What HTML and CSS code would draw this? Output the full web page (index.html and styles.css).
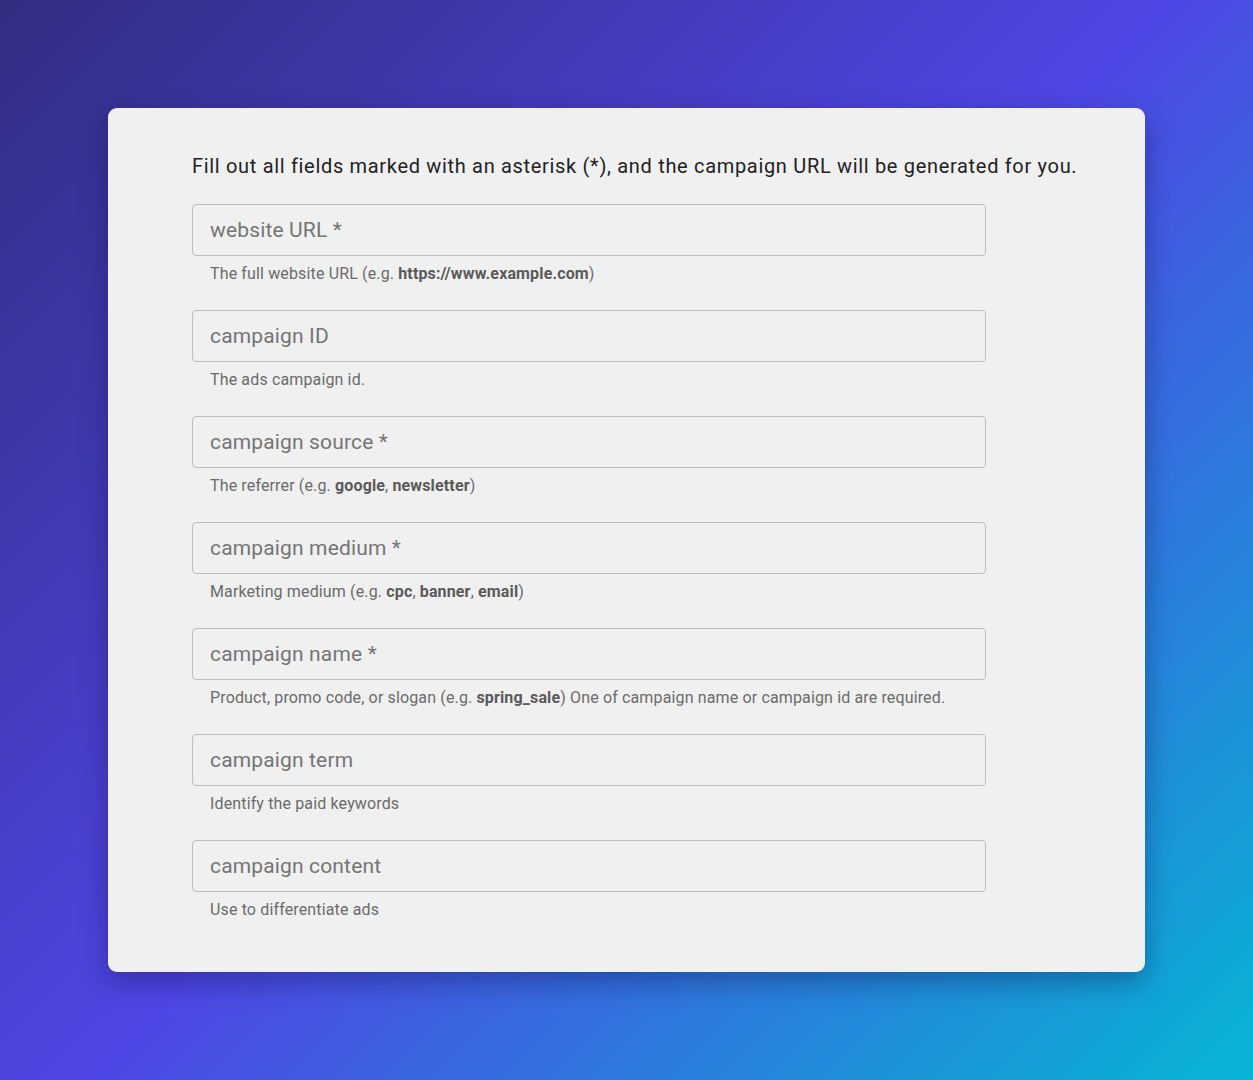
FILE: index.html
```html
<!DOCTYPE html>
<html lang="en">
<head>
<meta charset="utf-8">
<title>Campaign URL Builder</title>
<link rel="stylesheet" href="styles.css">
</head>
<body>
<main class="page">
  <section class="card">
    <p class="intro">Fill out all fields marked with an asterisk (*), and the campaign URL will be generated for you.</p>
    <div class="fields">
      <div class="field">
        <input class="input" type="text" placeholder="website URL *">
        <p class="help">The full website URL (e.g. <b>https://www.example.com</b>)</p>
      </div>
      <div class="field">
        <input class="input" type="text" placeholder="campaign ID">
        <p class="help">The ads campaign id.</p>
      </div>
      <div class="field">
        <input class="input" type="text" placeholder="campaign source *">
        <p class="help">The referrer (e.g. <b>google</b>, <b>newsletter</b>)</p>
      </div>
      <div class="field">
        <input class="input" type="text" placeholder="campaign medium *">
        <p class="help">Marketing medium (e.g. <b>cpc</b>, <b>banner</b>, <b>email</b>)</p>
      </div>
      <div class="field">
        <input class="input" type="text" placeholder="campaign name *">
        <p class="help">Product, promo code, or slogan (e.g. <b>spring_sale</b>) One of campaign name or campaign id are required.</p>
      </div>
      <div class="field">
        <input class="input" type="text" placeholder="campaign term">
        <p class="help">Identify the paid keywords</p>
      </div>
      <div class="field">
        <input class="input" type="text" placeholder="campaign content">
        <p class="help">Use to differentiate ads</p>
      </div>
    </div>
  </section>
</main>
</body>
</html>
```

FILE: styles.css
```css
* { box-sizing: border-box; }
html, body { margin: 0; padding: 0; }
body {
  font-family: Roboto, "Liberation Sans", sans-serif;
  min-height: 1080px;
  background: linear-gradient(135deg, #312e81 0%, #4f46e5 50%, #06b6d4 100%);
}
.page {
  min-height: 1080px;
  display: flex;
  align-items: center;
  justify-content: center;
}
.card {
  width: 1037px;
  height: 864px;
  background: #f0f0f0;
  border-radius: 9px;
  padding: 44px 84px 53px 84px;
  box-shadow: 0 10px 28px rgba(10, 10, 60, 0.35);
}
.intro {
  margin: 0 0 24px 0;
  font-size: 20px;
  line-height: 28px;
  color: #222;
  letter-spacing: 0.68px;
  white-space: nowrap;
}
.fields {
  display: flex;
  flex-direction: column;
  gap: 26px;
}
.field { display: flex; flex-direction: column; }
.input {
  width: 794px;
  height: 52px;
  border: 1.5px solid #bcbcbc;
  border-radius: 4px;
  background: #f0f0f0;
  padding: 0 17px;
  font-family: Roboto, "Liberation Sans", sans-serif;
  font-size: 21px;
  letter-spacing: 0.15px;
  color: #333;
  outline: none;
}
.input::placeholder { color: #757575; opacity: 1; }
.help {
  margin: 8px 0 0 18px;
  font-size: 16px;
  line-height: 20px;
  letter-spacing: 0.14px;
  color: #6b6b6b;
}
.help b { font-weight: 700; color: #5a5a5a; }
```
